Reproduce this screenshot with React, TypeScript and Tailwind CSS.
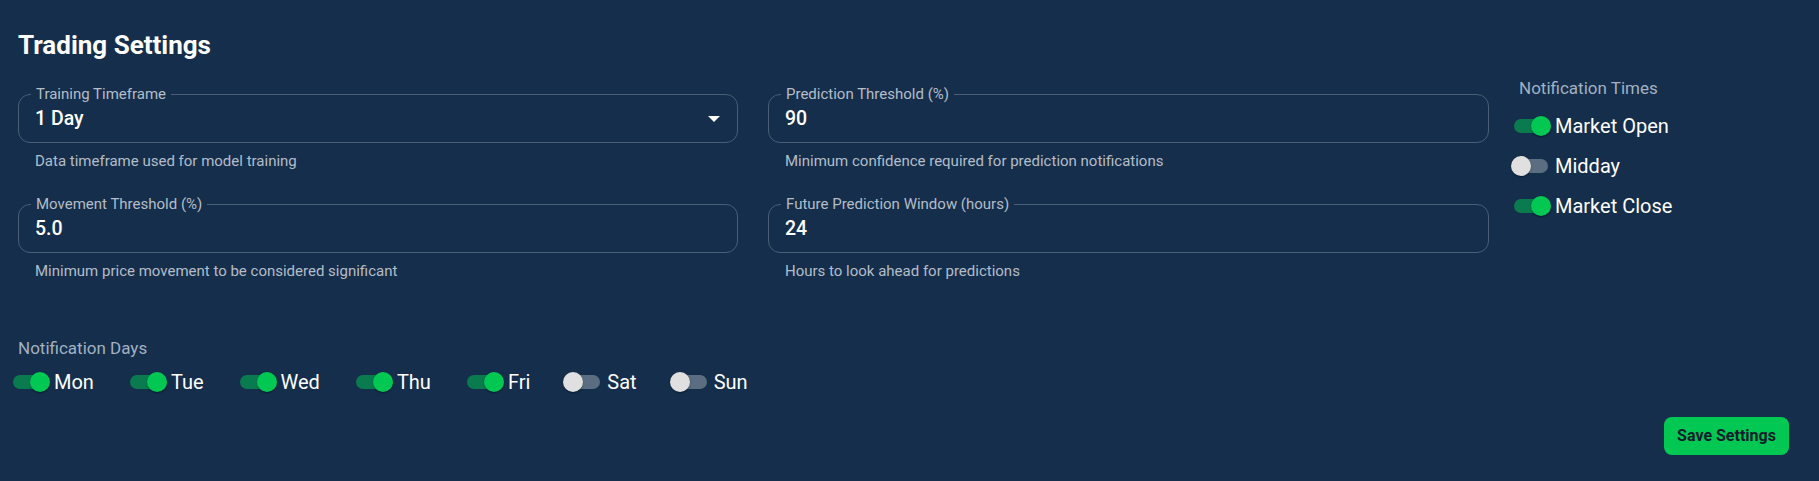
import { useState } from "react";

type FieldProps = {
  label: string;
  value: string;
  helper: string;
  select?: boolean;
};

function OutlinedField({ label, value, helper, select }: FieldProps) {
  return (
    <div className="flex flex-col">
      <div className="relative h-[49px] rounded-[12px] border border-[#4a5e76] flex items-center pl-[16px] pr-[16px]">
        <span className="absolute left-[12px] -top-[10px] h-[18px] px-[5px] bg-[#142e4b] text-[15px] leading-[18px] text-[#b4bdc8]">
          {label}
        </span>
        <span className="flex-1 text-[19.5px] font-medium text-white leading-[24px]">{value}</span>
        {select && (
          <svg width="12" height="6" viewBox="0 0 12 6" className="mr-[1px]">
            <polygon points="0,0 12,0 6,6" fill="#ffffff" />
          </svg>
        )}
      </div>
      <p className="mt-2 pl-[17px] text-[15px] leading-5 text-[#b4bdc8]">{helper}</p>
    </div>
  );
}

function Toggle({ label, on, onChange }: { label: string; on: boolean; onChange: () => void }) {
  return (
    <button type="button" onClick={onChange} className="flex items-center cursor-pointer">
      <span className={`relative w-[34px] h-[14px] rounded-full ${on ? "bg-[#0a7b4f]" : "bg-[#5a6d81]"}`}>
        <span
          className={`absolute -top-[3px] w-5 h-5 rounded-full shadow-[0_2px_1px_-1px_rgba(0,0,0,0.2),0_1px_1px_0_rgba(0,0,0,0.14),0_1px_3px_0_rgba(0,0,0,0.12)] ${
            on ? "left-[17px] bg-[#00c853]" : "-left-[3px] bg-[#e0e0e0]"
          }`}
        />
      </span>
      <span className="ml-[7px] text-[20px] leading-6 text-white">{label}</span>
    </button>
  );
}

const TIMES = ["Market Open", "Midday", "Market Close"];
const DAYS = ["Mon", "Tue", "Wed", "Thu", "Fri", "Sat", "Sun"];

export default function App() {
  const [times, setTimes] = useState<Record<string, boolean>>({
    "Market Open": true,
    Midday: false,
    "Market Close": true,
  });
  const [days, setDays] = useState<Record<string, boolean>>({
    Mon: true,
    Tue: true,
    Wed: true,
    Thu: true,
    Fri: true,
    Sat: false,
    Sun: false,
  });

  return (
    <div className="min-h-screen w-full bg-[#142e4b] font-['Roboto',sans-serif] px-[18px] pt-[30px] pb-[26px]">
      <h1 className="text-[26px] leading-[30px] font-bold text-white">Trading Settings</h1>

      <div className="mt-[16px] grid grid-cols-[720px_721px_1fr] gap-x-[30px]">
        <div className="pt-[18px] flex flex-col gap-[33px]">
          <OutlinedField label="Training Timeframe" value="1 Day" helper="Data timeframe used for model training" select />
          <OutlinedField label="Movement Threshold (%)" value="5.0" helper="Minimum price movement to be considered significant" />
        </div>
        <div className="pt-[18px] flex flex-col gap-[33px]">
          <OutlinedField label="Prediction Threshold (%)" value="90" helper="Minimum confidence required for prediction notifications" />
          <OutlinedField label="Future Prediction Window (hours)" value="24" helper="Hours to look ahead for predictions" />
        </div>
        <div className="flex flex-col">
          <p className="text-[17px] leading-6 text-[#a3b1c2]">Notification Times</p>
          <div className="mt-[6px] -ml-[5px] flex flex-col">
            {TIMES.map((t) => (
              <div key={t} className="h-10 flex items-center">
                <Toggle label={t} on={times[t]} onChange={() => setTimes((s) => ({ ...s, [t]: !s[t] }))} />
              </div>
            ))}
          </div>
        </div>
      </div>

      <p className="mt-[55px] text-[17px] leading-6 text-[#a3b1c2]">Notification Days</p>
      <div className="mt-[8px] -ml-[5px] h-7 flex items-center gap-[36px]">
        {DAYS.map((d) => (
          <Toggle key={d} label={d} on={days[d]} onChange={() => setDays((s) => ({ ...s, [d]: !s[d] }))} />
        ))}
      </div>

      <div className="mt-[21px] flex justify-end pr-[12px]">
        <button className="w-[125px] h-[38px] rounded-[8px] bg-[#00c853] text-[16px] font-bold text-[#0e1c2b] flex items-center justify-center">
          Save Settings
        </button>
      </div>
    </div>
  );
}
